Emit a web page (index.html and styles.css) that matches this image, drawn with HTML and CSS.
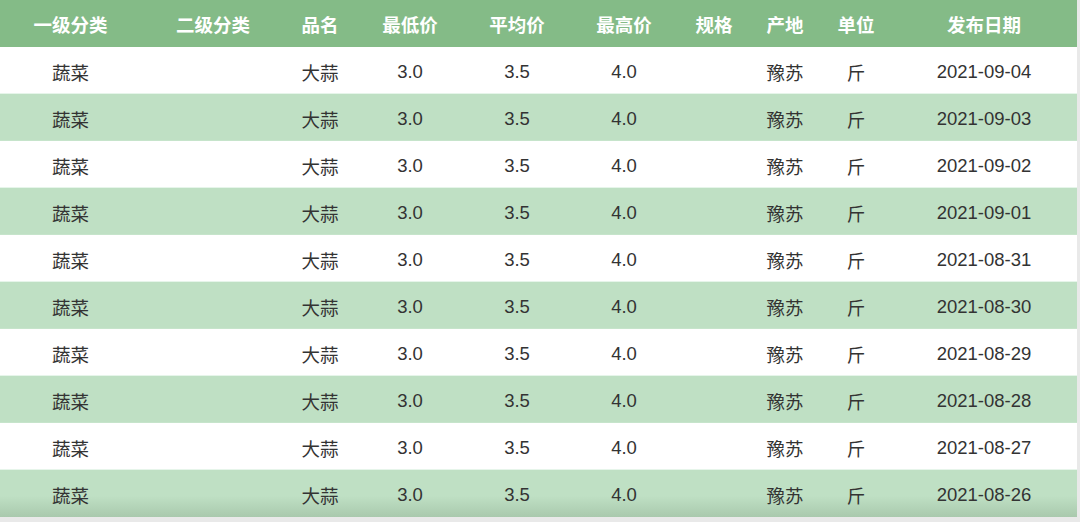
FILE: index.html
```html
<!DOCTYPE html>
<html lang="zh">
<head>
<meta charset="utf-8">
<title>价格表</title>
<link rel="stylesheet" href="styles.css">
</head>
<body>
<div class="table">
  <div class="row head">
    <div>一级分类</div><div>二级分类</div><div>品名</div><div>最低价</div><div>平均价</div><div>最高价</div><div>规格</div><div>产地</div><div>单位</div><div>发布日期</div>
  </div>
  <div class="row"><div>蔬菜</div><div></div><div>大蒜</div><div>3.0</div><div>3.5</div><div>4.0</div><div></div><div>豫苏</div><div>斤</div><div>2021-09-04</div></div>
  <div class="row alt"><div>蔬菜</div><div></div><div>大蒜</div><div>3.0</div><div>3.5</div><div>4.0</div><div></div><div>豫苏</div><div>斤</div><div>2021-09-03</div></div>
  <div class="row"><div>蔬菜</div><div></div><div>大蒜</div><div>3.0</div><div>3.5</div><div>4.0</div><div></div><div>豫苏</div><div>斤</div><div>2021-09-02</div></div>
  <div class="row alt"><div>蔬菜</div><div></div><div>大蒜</div><div>3.0</div><div>3.5</div><div>4.0</div><div></div><div>豫苏</div><div>斤</div><div>2021-09-01</div></div>
  <div class="row"><div>蔬菜</div><div></div><div>大蒜</div><div>3.0</div><div>3.5</div><div>4.0</div><div></div><div>豫苏</div><div>斤</div><div>2021-08-31</div></div>
  <div class="row alt"><div>蔬菜</div><div></div><div>大蒜</div><div>3.0</div><div>3.5</div><div>4.0</div><div></div><div>豫苏</div><div>斤</div><div>2021-08-30</div></div>
  <div class="row"><div>蔬菜</div><div></div><div>大蒜</div><div>3.0</div><div>3.5</div><div>4.0</div><div></div><div>豫苏</div><div>斤</div><div>2021-08-29</div></div>
  <div class="row alt"><div>蔬菜</div><div></div><div>大蒜</div><div>3.0</div><div>3.5</div><div>4.0</div><div></div><div>豫苏</div><div>斤</div><div>2021-08-28</div></div>
  <div class="row"><div>蔬菜</div><div></div><div>大蒜</div><div>3.0</div><div>3.5</div><div>4.0</div><div></div><div>豫苏</div><div>斤</div><div>2021-08-27</div></div>
  <div class="row alt last"><div>蔬菜</div><div></div><div>大蒜</div><div>3.0</div><div>3.5</div><div>4.0</div><div></div><div>豫苏</div><div>斤</div><div>2021-08-26</div></div>
</div>
</body>
</html>
```

FILE: styles.css
```css
html, body {
  margin: 0;
  padding: 0;
  background: #e9e9e9;
}
body {
  font-family: "Liberation Sans", "Noto Sans CJK SC", sans-serif;
  font-size: 18.5px;
  color: #333333;
  width: 1080px;
  height: 522px;
  overflow: hidden;
}
.table {
  width: 1077px;
  display: flex;
  flex-direction: column;
}
.row {
  display: grid;
  grid-template-columns: 141px 144px 70px 110px 104px 110px 70px 72px 70px 186px;
  height: 47px;
  padding-top: 3px;
  align-items: center;
  background: #ffffff;
  box-sizing: border-box;
  border-bottom: 1px solid #e6f5ea;
}
.row > div {
  text-align: center;
  white-space: nowrap;
}
.head {
  background: #84bb87;
  color: #ffffff;
  font-weight: bold;
  padding-top: 0;
  border-bottom: none;
}
.alt {
  background: #bfe0c4;
  border-bottom: 1px solid #c6e4cb;
}
.last {
  background: linear-gradient(#bfe0c4 55%, #a9c9ad);
  border-bottom: none;
}
```
